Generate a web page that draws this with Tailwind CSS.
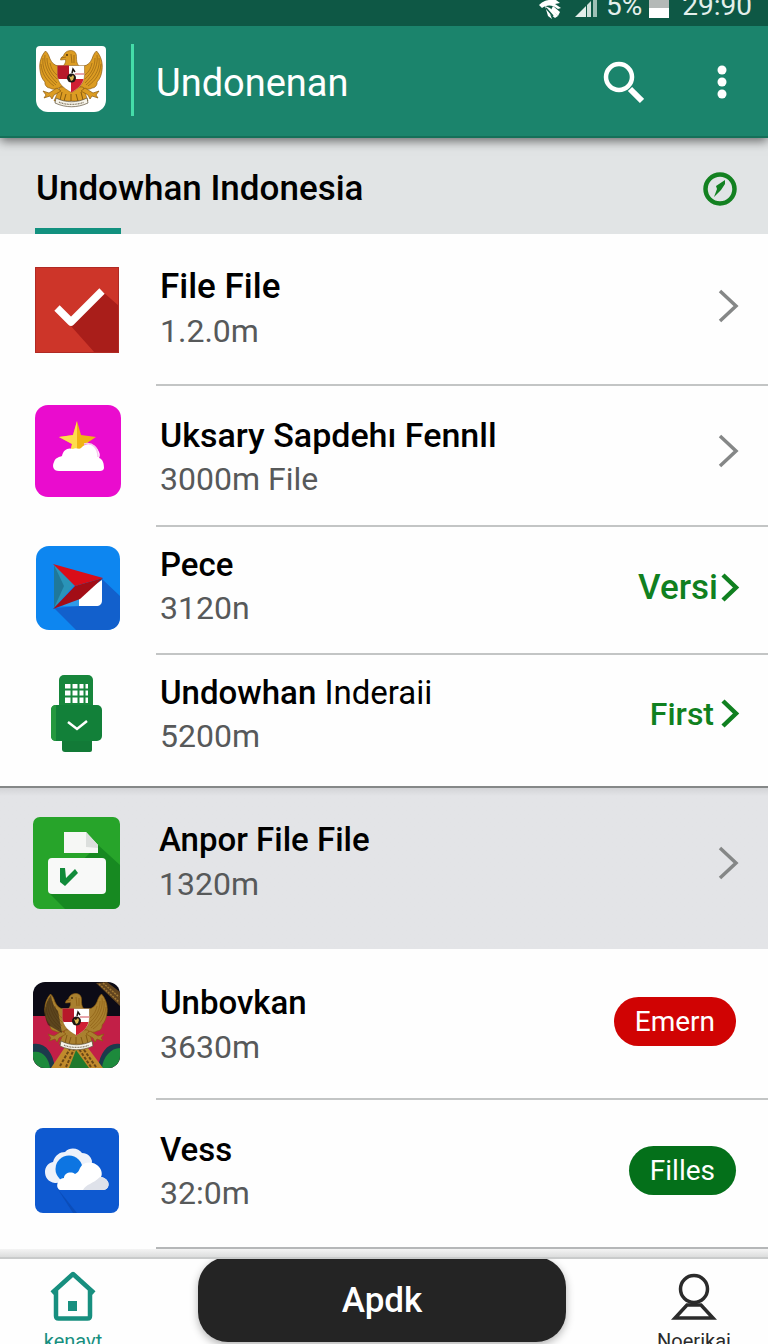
<!DOCTYPE html>
<html lang="id">
<head>
<meta charset="utf-8">
<meta name="viewport" content="width=device-width, initial-scale=1">
<title>Undonenan</title>
<script src="https://cdn.jsdelivr.net/npm/@tailwindcss/browser@4"></script>
</head>
<body class="flex h-screen flex-col overflow-hidden bg-[#fefefe] font-['Roboto',sans-serif] text-black">

<!-- Shared Garuda emblem; feathers take the current text colour -->
<svg class="hidden" aria-hidden="true">
  <symbol id="garuda" viewBox="0 0 70 66">
    <g>
      <path d="M9.500 5C5 10 3 17 4 24c.5 5 2 9 5 12-.5 3 2 6 5 6 3 2 6 1 9 0l4-2-5-20c-4-1-6-3-8-7-1-3-2-6-4.500-8z" fill="currentColor" stroke="#8a5a10" stroke-width=".7"/>
      <path d="M9 9c-1 8 1 17 12 28M7 12c-1 9 2 18 13 27M5 18c1 10 5 16 13 22M11 12c0 8 3 15 10 21M14 17c1 5 3 9 7 12" fill="none" stroke="#8a5a10" stroke-width=".6"/>
    </g>
    <g>
      <path d="M60.500 5C65 10 67 17 66 24c-.5 5-2 9-5 12 .5 3-2 6-5 6-3 2-6 1-9 0l-4-2 5-20c4-1 6-3 8-7 1-3 2-6 4.500-8z" fill="currentColor" stroke="#8a5a10" stroke-width=".7"/>
      <path d="M61 9c1 8-1 17-12 28M63 12c1 9-2 18-13 27M65 18c-1 10-5 16-13 22M59 12c0 8-3 15-10 21M56 17c-1 5-3 9-7 12" fill="none" stroke="#8a5a10" stroke-width=".6"/>
    </g>
    <path d="M27 20c2-2 3-4 2.500-6.500l-5 .5c0-2 1-3 3-4 1-4 4-5.500 8-5.500 3.500.5 5 3 5 6 0 4 0 7 2.500 9.500z" fill="currentColor" stroke="#8a5a10" stroke-width=".6"/>
    <circle cx="31" cy="9" r=".9" fill="#3b2408"/>
    <path d="M25 12l5-1M35 8l1 9M38 9v8" stroke="#8a5a10" stroke-width=".7"/>
    <path d="M24 41h23l5 14H18z" fill="currentColor" stroke="#8a5a10" stroke-width=".6"/>
    <path d="M26 46l-2 8M30 48l-2 7M35 48v7M40 48l2 7M45 46l2 8" stroke="#7a5210" stroke-width=".9"/>
    <path d="M21 42l-8 5-6-2 3 4-2 3 6-2 2 3 2-4 7-4zM49 42l8 5 6-2-3 4 2 3-6-2-2 3-2-4-7-4z" fill="currentColor" stroke="#8a5a10" stroke-width=".7"/>
    <path d="M21.500 19.500h27V29c0 8-5 13-13 17.500C27 42 21.500 37 21.500 29z" fill="#fff" stroke="#8a5a10" stroke-width=".5"/>
    <path d="M21.500 19.500H33V33H22.500c-.7-1.500-1-2.500-1-4z" fill="#b8182a"/>
    <path d="M35 33h12.500c-1.500 6-6 10-12.500 13.500z" fill="#d01f33"/>
    <path d="M39 28h9.300" stroke="#e8a4aa" stroke-width="2"/>
    <circle cx="35.500" cy="32" r="4.500" fill="#201711"/>
    <path d="M33 30l2 1 2-2 1 2-1 3-2 1z" fill="#d7b64f"/>
    <path d="M36 27l1-4 2 3" fill="none" stroke="#201711" stroke-width="1.500"/>
    <path d="M20 52c10 5 21 5 31 0l1 5c-11 5-22 5-33 0z" fill="#f7f4ea" stroke="#5c503a" stroke-width=".7"/>
    <path d="M23 56.200c8 3 17 3 25 0" fill="none" stroke="#867b66" stroke-width="1.300" stroke-dasharray="1 .6"/>
  </symbol>
</svg>

<header class="relative z-10 shrink-0 shadow-[0_3px_10px_rgba(0,0,0,0.55)]">
  <div class="flex h-[26px] items-end justify-end overflow-hidden bg-[#0e5845] pr-4 pb-1.5 text-[28px] leading-7 text-[#e4efeb]">
    <svg class="mr-3 h-7 w-6 shrink-0" viewBox="0 0 24 28" fill="#fff" aria-hidden="true">
      <path d="M1 13C5 9 9 8 12 8h6l4 3-5 1 6 4-3 1c-6-5-12-4-16-1z"/><path d="M7 14l5 2 8 8-3 2-5-4 2 5-4-3z"/><path d="M15 14l7 6-2 4-7-6z"/>
      <path d="M8 16l7 8" stroke="#0e5845" stroke-width="1.500"/>
    </svg>
    <svg class="mr-2 h-7 w-6 shrink-0" viewBox="0 0 24 28" aria-hidden="true">
      <path d="M1 25L12 14v11z" fill="#e4efeb"/><path d="M13 13l4-4v16h-4z" fill="#cfe0da"/><path d="M19 7l4-4v22h-4z" fill="#9dbfb5"/>
    </svg>
    <span>5%</span>
    <svg class="mr-3 ml-1.5 h-7 w-[22px] shrink-0" viewBox="0 0 22 28" aria-hidden="true"><path d="M1 3h20v14H1z" fill="#b4b9b7"/><path d="M1 16h20v10H1z" fill="#fff"/></svg>
    <span>29:90</span>
  </div>
  <div class="flex h-[112px] items-center border-b-2 border-[#157059] bg-[#1b846c] pt-1 pr-8 pl-9">
    <svg class="mb-2 h-[66px] w-[70px] shrink-0 rounded-t-sm rounded-b-xl bg-white text-[#dc9c22]" role="img" aria-label="Garuda"><use href="#garuda"/></svg>
    <span class="mb-1.5 ml-[25px] h-[72px] w-[3px] bg-[#45dda9]"></span>
    <h1 class="ml-[22px] flex-1 text-[38px] leading-[48px] text-white">Undonenan</h1>
    <button type="button" aria-label="Cari" class="mr-16">
      <svg class="h-11 w-11" viewBox="0 0 44 44" fill="none" stroke="#fff"><circle cx="19" cy="16" r="13" stroke-width="4.500"/><path d="M30 28l12 12" stroke-width="6"/></svg>
    </button>
    <button type="button" aria-label="Menu" class="mb-0.5">
      <svg class="h-10 w-7" viewBox="0 0 28 40" fill="#fff"><circle cx="14" cy="8" r="4.500"/><circle cx="14" cy="20" r="4.500"/><circle cx="14" cy="32" r="4.500"/></svg>
    </button>
  </div>
</header>

<main class="flex-1 overflow-hidden">
  <div class="flex h-24 flex-col bg-[#e1e4e5] pr-[31px] pl-[35px]">
    <div class="flex flex-1 items-center justify-between pt-3">
      <h2 class="pl-px text-[35px] leading-[44px] font-medium">Undowhan Indonesia</h2>
      <svg class="h-[34px] w-[34px]" viewBox="0 0 34 34" aria-hidden="true"><circle cx="17" cy="17" r="14.500" fill="none" stroke="#138121" stroke-width="4.500"/><path d="M22 8l-9 6 1 3-3 8 7-7 4-6z" fill="#138121"/></svg>
    </div>
    <span class="h-1.5 w-[86px] bg-[#12917f]"></span>
  </div>

  <ul>
    <li class="relative flex h-[152px] items-center bg-[#fefefe] pr-7 pb-1">
      <span class="flex w-[156px] pt-1 pl-[35px]">
        <svg class="h-[86px] w-[84px]" viewBox="0 0 84 86"><path d="M0 0h84v86H0z" fill="#cd3529"/><path d="M68 25l16 14v47H60L35 58z" fill="#a91e1a"/><path d="M22 41l14 14 31-31" fill="none" stroke="#fff" stroke-width="7.500" stroke-linejoin="round"/><path d="M.5.500h83v85H.5z" fill="none" stroke="#b02a24"/></svg>
      </span>
      <span class="min-w-0 flex-1 pl-1"><span class="block text-[35px] leading-[46px] font-medium">File File</span><span class="block text-[32px] leading-[42px] text-[#57595a]">1.2.0m</span></span>
      <svg class="mb-1 h-9 w-6" viewBox="0 0 24 36" fill="none" stroke="#858787" stroke-width="3.500"><path d="M4 3l16 15L4 33"/></svg>
      <span class="absolute right-0 bottom-0 left-[156px] h-0.5 bg-[#c3c5c5]"></span>
    </li>
    <li class="relative flex h-[141px] items-center bg-[#fefefe] pr-7 pb-3">
      <span class="flex w-[156px] pl-[35px]">
        <svg class="h-[92px] w-[86px]" viewBox="0 0 86 92"><rect width="86" height="92" rx="13" fill="#ea0cce"/><path d="M42 16l4 14 15 2-12 8 1 10-7-4-8 2 2-9-13-7 14-2z" fill="#f0b414"/><path d="M42 16v30l-7 2 2-9-13-7 14-2z" fill="#ffdc4d"/><path d="M24 66c-6 0-7-5-5-9 1-4 5-5 8-6 1-6 6-9 11-7 3-2 6 1 8-1 6-7 15-4 18 4 1 2 1 4 0 6 4 1 5 6 5 10 0 2-2 3-4 3z" fill="#fff"/><path d="M49 39c9-2 14 4 14 13" fill="none" stroke="#f6c9ee" stroke-width="1.500"/></svg>
      </span>
      <span class="min-w-0 flex-1 pt-2.5 pl-1"><span class="block text-[34px] leading-[46px] font-medium">Uksary Sapdehı Fennll</span><span class="block text-[32px] leading-[42px] text-[#57595a]">3000m File</span></span>
      <svg class="h-9 w-6" viewBox="0 0 24 36" fill="none" stroke="#858787" stroke-width="3.500"><path d="M4 3l16 15L4 33"/></svg>
      <span class="absolute right-0 bottom-0 left-[156px] h-0.5 bg-[#c3c5c5]"></span>
    </li>
    <li class="relative flex h-32 items-center bg-[#fefefe] pr-7 pb-1.5">
      <span class="flex w-[156px] pl-9">
        <svg class="h-[84px] w-[84px]" viewBox="0 0 84 84"><rect width="84" height="84" rx="13" fill="#0d86f0"/><path d="M18 62l26-2 22-27 18 17v21c0 8-5 13-13 13H40z" fill="#1260cc"/><path d="M18 19v43l20-23z" fill="#2a94b8"/><path d="M18 19v43l10-22z" fill="#1f7899"/><path d="M42 50l24-16v20c0 4-2 6-6 6H42z" fill="#fff"/><path d="M26 59l17-9v10H28z" fill="#2f9be8"/><path d="M17 18l50 14-28 8z" fill="#d90d18"/><path d="M17 63l22-23 28-8-23 21z" fill="#a30d16"/></svg>
      </span>
      <span class="min-w-0 flex-1 pb-1 pl-1"><span class="block text-[33px] leading-[44px] font-medium">Pece</span><span class="block text-[32px] leading-[42px] text-[#57595a]">3120n</span></span>
      <a href="#" class="flex items-center text-[35px] leading-[44px] font-medium text-[#108020]">Versi<svg class="ml-0.5 h-8 w-5" viewBox="0 0 20 32" fill="none" stroke="currentColor" stroke-width="4.500"><path d="M3 3l13 12.500L3 28"/></svg></a>
      <span class="absolute right-0 bottom-0 left-[156px] h-0.5 bg-[#c3c5c5]"></span>
    </li>
    <li class="relative flex h-[131px] items-center bg-[#fefefe] pr-7 pb-3.5">
      <span class="flex w-[156px] pl-[51px]">
        <svg class="h-[78px] w-[52px]" viewBox="0 0 52 78"><path d="M11 62h30v13q0 2-2 2H14q-3 0-3-3z" fill="#127a37"/><rect x="8" width="34" height="38" rx="5" fill="#17863c"/><path d="M14 9h23v19H14z" fill="#fff"/><path d="M20.500 8v21M27.500 8v21M33.500 8v21M13 14.500h25M13 21.500h25" stroke="#17863c" stroke-width="2"/><rect y="30" width="51" height="36" rx="5" fill="#128039"/><path d="M5 30q-5 0-5 5v26q0 5 5 5z" fill="#25983f"/><path d="M17 47l9 7 10-8" fill="none" stroke="#fff" stroke-width="2.500"/></svg>
      </span>
      <span class="min-w-0 flex-1 pl-1"><span class="block text-[33px] leading-[44px] font-medium">Undowhan <span class="font-normal">Inderaii</span></span><span class="block text-[32px] leading-[42px] text-[#57595a]">5200m</span></span>
      <a href="#" class="flex items-center text-[32px] leading-[44px] font-medium text-[#108020]">First<svg class="ml-1.5 h-8 w-5" viewBox="0 0 20 32" fill="none" stroke="currentColor" stroke-width="4.500"><path d="M3 3l13 12.500L3 28"/></svg></a>
    </li>
    <li class="relative flex h-[163px] items-center border-t-2 border-[#858888] bg-[#e3e4e7] bg-linear-to-b from-[#d3d4d7] to-[#e3e4e7] to-5% pr-7 pb-3">
      <span class="flex w-[156px] pl-[33px]">
        <svg class="h-[92px] w-[87px]" viewBox="0 0 87 92"><rect width="87" height="92" rx="7" fill="#27a42a"/><path d="M65 28l22 20v37q0 7-7 7H32L16 76z" fill="#178921"/><path d="M31 15h22l12 13v8H31z" fill="#f6f7f5"/><path d="M53 15l12 13v3L53 30z" fill="#dcdfdd"/><rect x="15" y="41" width="58" height="36" rx="4" fill="#f8f9f8"/><path d="M27 51h5l1 10 9-9 3 4-13 13-5-4z" fill="#118b3a"/></svg>
      </span>
      <span class="min-w-0 flex-1 pb-1 pl-[3px]"><span class="block text-[33px] leading-[46px] font-medium">Anpor File File</span><span class="block text-[32px] leading-[42px] text-[#57595a]">1320m</span></span>
      <svg class="h-9 w-6" viewBox="0 0 24 36" fill="none" stroke="#858787" stroke-width="3.500"><path d="M4 3l16 15L4 33"/></svg>
    </li>
    <li class="relative flex h-[151px] items-center bg-[#fefefe] pr-8 pb-0.5">
      <span class="flex w-[156px] pt-0.5 pl-[33px]">
        <svg class="h-[86px] w-[87px] rounded-xl text-[#a9802f]" viewBox="0 0 87 86"><path d="M0 0h87v86H0z" fill="#0c0b16"/><path d="M0 34h87v52H0z" fill="#c21f47"/><path d="M63 1l24 23V10L74 0z" fill="#61441f"/><path d="M66 2l20 18M70 1l16 14" stroke="#a07834" stroke-width="1.500" stroke-dasharray="2 1"/><path d="M0 86V62c12-2 20 8 22 24zM87 86V62c-12-2-20 8-22 24z" fill="#1c3a4c"/><path d="M0 86V70c9-2 16 6 17 16zM87 86V66c-9 0-17 9-18 20z" fill="#1d8a3c"/><path d="M18 86l16-24h18l18 24z" fill="#c08a2c"/><path d="M36 86l7-18 13 18z" fill="#217a2d"/><path d="M27 84l11-19M33 85l8-18M63 85L49 65M58 85L46 67" stroke="#6a4716" stroke-width="2" stroke-dasharray="3 1.500"/><use href="#garuda" x="8" y="7" width="70" height="66"/><path d="M18 13c-7 9-8 20-3 30l14 8-4-22c-4-4-6-9-7-16z" fill="#1b1410" opacity=".55"/></svg>
      </span>
      <span class="min-w-0 flex-1 pl-1"><span class="block text-[33px] leading-[46px] font-medium">Unbovkan</span><span class="block text-[32px] leading-[42px] text-[#57595a]">3630m</span></span>
      <button type="button" class="mb-1 h-[49px] rounded-full bg-[#d00303] px-[21px] text-[28px] leading-[48px] text-white">Emern</button>
      <span class="absolute right-0 bottom-0 left-[156px] h-0.5 bg-[#c3c5c5]"></span>
    </li>
    <li class="relative flex h-[149px] items-center bg-[#fefefe] pr-8 pb-2">
      <span class="flex w-[156px] pl-[35px]">
        <svg class="h-[85px] w-[84px]" viewBox="0 0 84 85"><rect width="84" height="85" rx="8" fill="#0e59d0"/><path d="M22 60l20 25h-4z" fill="#0b4db9"/><path d="M20 55c-7-1-10-6-10-11s3-9 8-10c2-7 7-10 12-10 6-6 14-3 17 1 6 0 9 4 10 8l-2 20z" fill="#eef2fa"/><circle cx="34" cy="41" r="13.500" fill="#0d75e2"/><path d="M25 62c-3-1-4-6-1-9 1-2 3-3 5-3 0-5 7-7 11-4 4-2 4-4 5-6 4-8 17-7 21 2 1 3 1 5 0 7 6 1 9 6 7 10-1 2-3 3-5 3z" fill="#fff"/><path d="M48 62c3-6 10-6 17-13l1 0c6 1 9 6 7 10-1 2-3 3-5 3z" fill="#dfe2ea"/></svg>
      </span>
      <span class="min-w-0 flex-1 pl-1"><span class="block text-[33px] leading-[44px] font-medium">Vess</span><span class="block text-[32px] leading-[42px] text-[#57595a]">32:0m</span></span>
      <button type="button" class="h-[49px] rounded-full bg-[#04701a] px-[21px] text-[28px] leading-[48px] text-white">Filles</button>
      <span class="absolute right-0 bottom-0 left-[156px] h-0.5 bg-[#b5b7b8]"></span>
    </li>
  </ul>
  <div class="h-2 bg-linear-to-b from-[#f4f4f4] to-[#dcdddd]"></div>
</main>

<nav class="flex h-[87px] shrink-0 items-start overflow-hidden border-t-2 border-[#c9cbcb] bg-[#fefefe]">
  <a href="#" class="flex w-[146px] flex-col items-center pt-3 text-[20px] leading-6 text-[#178f7f]">
    <svg class="mb-2 h-[50px] w-12" viewBox="0 0 48 50" fill="none" stroke="currentColor" stroke-width="4.500" stroke-linejoin="round"><path d="M3 22L24 3l21 19M7 19v26q0 2.500 2.500 2.500h29q2.500 0 2.500-2.500V19"/><path d="M19 30h9v10h-9z" fill="currentColor" stroke="none"/></svg>
    kenavt
  </a>
  <button type="button" class="-mt-0.5 ml-[52px] h-[85px] flex-1 rounded-[30px] bg-[#242424] pt-1 text-[35px] font-medium text-white shadow-[0_3px_8px_rgba(0,0,0,0.3)]">Apdk</button>
  <a href="#" class="ml-[54px] flex w-[148px] flex-col items-center pt-3 text-[20px] leading-6 text-[#2b2b2b]">
    <svg class="mb-2 h-[50px] w-12" viewBox="0 0 48 50" fill="none" stroke="currentColor" stroke-width="3.500"><circle cx="24" cy="18" r="13.500"/><path d="M17 34h14l12 13H5z"/></svg>
    Noerikai
  </a>
</nav>
</body>
</html>
